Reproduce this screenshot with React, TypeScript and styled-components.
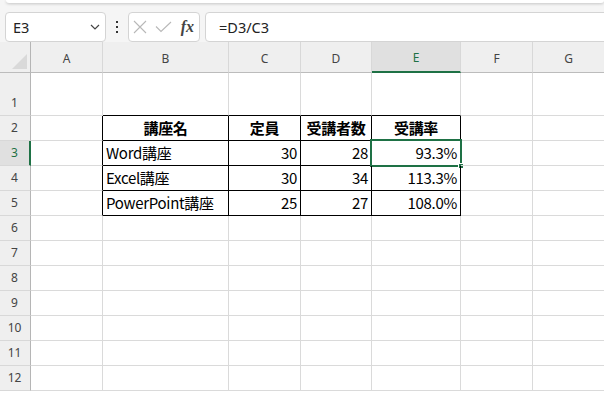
import React from 'react';
import styled, { createGlobalStyle } from 'styled-components';

const GREEN = '#1e7145';
const GRID = '#dadada';
const HEAD_BG = '#efefef';
const HEAD_SEL = '#e0e0e0';
const BLACK = '#000';

const GlobalStyle = createGlobalStyle`
  html, body { margin: 0; padding: 0; background: #f5f5f5; overflow: hidden; }
  body { font-family: "Noto Sans", "Noto Sans CJK JP", sans-serif; }
  * { box-sizing: border-box; }
`;

const Page = styled.div`
  width: 604px;
  height: 393px;
  overflow: hidden;
  display: flex;
  flex-direction: column;
  background: #f5f5f5;
  & > * { flex-shrink: 0; }
`;

const RibbonEdge = styled.div`
  height: 3px;
  margin-left: 6px;
  background: #fff;
  border-radius: 0 0 6px 6px;
  box-shadow: 0 1px 3px rgba(0, 0, 0, 0.2);
`;

const FormulaBar = styled.div`
  display: flex;
  height: 30px;
  margin-top: 9px;
  padding-left: 5px;
`;

const Box = styled.div`
  background: #fff;
  border: 1px solid #d4d4d4;
  border-radius: 4px;
  display: flex;
  align-items: center;
`;

const NameBox = styled(Box)`
  width: 101px;
  padding: 0 5px 0 7px;
  justify-content: space-between;
  font-size: 14.5px;
  color: #222;
`;

const DotsSlot = styled.div`
  width: 22px;
  display: flex;
  align-items: center;
  justify-content: center;
`;

const FxBox = styled(Box)`
  width: 72px;
  padding: 0 4px 0 4px;
  justify-content: space-between;
`;

const FxText = styled.span`
  font-family: "Liberation Serif", "DejaVu Serif", serif;
  font-style: italic;
  font-weight: bold;
  font-size: 16px;
  color: #444;
  margin-right: 1px;
`;

const FormulaInput = styled(Box)`
  flex: 1;
  margin-left: 5px;
  margin-right: -8px;
  padding-left: 13px;
  font-size: 14.5px;
  color: #222;
`;

const Sheet = styled.div`
  display: grid;
  grid-template-columns: 31px 72px 126px 72px 71px 89px 72px 72px;
  grid-template-rows: 31px 43px repeat(12, 25px);
  background: #fff;
`;

const Corner = styled.div`
  background: ${HEAD_BG};
  border-right: 1px solid #b5b5b5;
  border-bottom: 1px solid #bcbcbc;
  display: flex;
  align-items: flex-end;
  justify-content: flex-end;
  padding: 0 3px 3px 0;
`;

const ColHeader = styled.div<{ $sel?: boolean }>`
  background: ${(p) => (p.$sel ? HEAD_SEL : HEAD_BG)};
  border-right: 1px solid #d8d8d8;
  border-bottom: ${(p) => (p.$sel ? `2px solid ${GREEN}` : '1px solid #bcbcbc')};
  display: flex;
  align-items: center;
  justify-content: center;
  padding-top: 2px;
  font-size: 12px;
  color: ${(p) => (p.$sel ? GREEN : '#444')};
`;

const RowHeader = styled.div<{ $sel?: boolean }>`
  background: ${(p) => (p.$sel ? HEAD_SEL : HEAD_BG)};
  border-right: ${(p) => (p.$sel ? `2px solid ${GREEN}` : '1px solid #b5b5b5')};
  border-bottom: 1px solid #d8d8d8;
  display: flex;
  align-items: flex-end;
  justify-content: center;
  font-size: 12px;
  line-height: 24px;
  padding-right: ${(p) => (p.$sel ? '0' : '1px')};
  color: ${(p) => (p.$sel ? GREEN : '#444')};
`;

const Cell = styled.div<{ $r: string; $b: string; $align: string; $bold?: boolean }>`
  position: relative;
  border-right: 1px solid ${(p) => p.$r};
  border-bottom: 1px solid ${(p) => p.$b};
  display: flex;
  align-items: flex-end;
  justify-content: ${(p) => p.$align};
  padding: 0 3px;
  font-family: "Noto Sans CJK JP", "Noto Sans", sans-serif;
  font-size: 15px;
  letter-spacing: -0.3px;
  line-height: 24px;
  font-weight: ${(p) => (p.$bold ? 700 : 400)};
  color: #000;
  white-space: nowrap;
`;

const Selection = styled.div`
  position: absolute;
  left: -2px;
  top: -2px;
  right: -2px;
  bottom: -2px;
  border: 2px solid ${GREEN};
  pointer-events: none;
`;

const FillHandle = styled.div`
  position: absolute;
  right: -4px;
  bottom: -4px;
  width: 6px;
  height: 6px;
  background: ${GREEN};
  border: 1px solid #fff;
`;

const COLS = ['A', 'B', 'C', 'D', 'E', 'F', 'G'];
const TABLE: Record<number, string[]> = {
  2: ['講座名', '定員', '受講者数', '受講率'],
  3: ['Word講座', '30', '28', '93.3%'],
  4: ['Excel講座', '30', '34', '113.3%'],
  5: ['PowerPoint講座', '25', '27', '108.0%'],
};

const inTable = (r: number, c: number) => r >= 2 && r <= 5 && c >= 1 && c <= 4;

const Chevron = () => (
  <svg width="10" height="6" viewBox="0 0 10 6">
    <path d="M1 1 L5 5 L9 1" fill="none" stroke="#444" strokeWidth="1.2" />
  </svg>
);

const Dots = () => (
  <svg width="4" height="12" viewBox="0 0 4 12">
    <rect x="1" y="0" width="2" height="2" fill="#333" />
    <rect x="1" y="5" width="2" height="2" fill="#333" />
    <rect x="1" y="10" width="2" height="2" fill="#333" />
  </svg>
);

const CancelIcon = () => (
  <svg width="14" height="14" viewBox="0 0 14 14">
    <path d="M1 1 L13 13 M13 1 L1 13" stroke="#b8b8b8" strokeWidth="1.1" fill="none" />
  </svg>
);

const CheckIcon = () => (
  <svg width="17" height="12" viewBox="0 0 17 12">
    <path d="M1 5.5 L6 10.5 L16 1" stroke="#b8b8b8" strokeWidth="1.1" fill="none" />
  </svg>
);

const CornerMark = () => (
  <svg width="15" height="15" viewBox="0 0 15 15">
    <path d="M15 0 L15 15 L0 15 Z" fill="#d9d9d9" />
  </svg>
);

export default function App() {
  const rows = Array.from({ length: 12 }, (_, i) => i + 1);
  return (
    <Page>
      <GlobalStyle />
      <RibbonEdge />
      <FormulaBar>
        <NameBox>
          <span>E3</span>
          <Chevron />
        </NameBox>
        <DotsSlot>
          <Dots />
        </DotsSlot>
        <FxBox>
          <CancelIcon />
          <CheckIcon />
          <FxText>fx</FxText>
        </FxBox>
        <FormulaInput>=D3/C3</FormulaInput>
      </FormulaBar>
      <Sheet>
        <Corner>
          <CornerMark />
        </Corner>
        {COLS.map((c) => (
          <ColHeader key={c} $sel={c === 'E'}>
            {c}
          </ColHeader>
        ))}
        {rows.map((r) => (
          <React.Fragment key={r}>
            <RowHeader $sel={r === 3}>{r}</RowHeader>
            {COLS.map((_, c) => {
              const t = inTable(r, c);
              const right = t || inTable(r, c + 1) ? BLACK : GRID;
              const bottom = t || inTable(r + 1, c) ? BLACK : GRID;
              const text = t ? TABLE[r][c - 1] : '';
              const align = r === 2 ? 'center' : c === 1 ? 'flex-start' : 'flex-end';
              const selected = r === 3 && c === 4;
              return (
                <Cell key={c} $r={right} $b={bottom} $align={align} $bold={r === 2 && t}>
                  {text}
                  {selected && (
                    <Selection>
                      <FillHandle />
                    </Selection>
                  )}
                </Cell>
              );
            })}
          </React.Fragment>
        ))}
      </Sheet>
    </Page>
  );
}
